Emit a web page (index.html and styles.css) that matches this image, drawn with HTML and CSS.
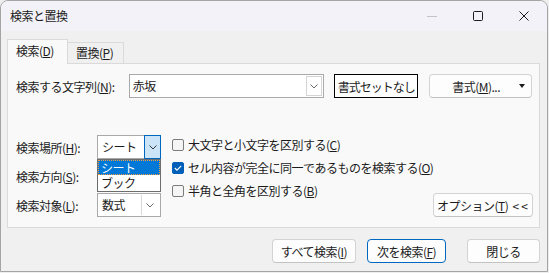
FILE: index.html
```html
<!DOCTYPE html>
<html>
<head>
    <title>検索と置換</title>
    <link rel="stylesheet" href="styles.css">
</head>
<body>
    <div class="window">
        <div class="titlebar">
            <span class="title">検索と置換</span>
            <div class="controls">
                <span class="ctl">
                    <svg width="10" height="10" viewBox="0 0 10 10"><path d="M0 5.5h10" stroke="#c4c4c4" stroke-width="1"/></svg>
                </span>
                <span class="ctl">
                    <svg width="10" height="10" viewBox="0 0 10 10"><rect x="0.5" y="0.5" width="9" height="9" rx="1" fill="none" stroke="#1b1b1b" stroke-width="1"/></svg>
                </span>
                <span class="ctl">
                    <svg width="10" height="10" viewBox="0 0 10 10"><path d="M0.5 0.5l9 9M9.5 0.5l-9 9" stroke="#1b1b1b" stroke-width="1"/></svg>
                </span>
            </div>
        </div>

        <div class="content">
            <div class="tabs">
                <div class="tab active">検索(<u>D</u>)</div>
                <div class="tab">置換(<u>P</u>)</div>
            </div>

            <div class="panel">
                <div class="find-row">
                    <span class="find-label">検索する文字列(<u>N</u>):</span>
                    <div class="combo find-combo">
                        <span class="combo-text">赤坂</span>
                        <span class="arrow-box">
                            <svg width="8" height="5" viewBox="0 0 8 5"><path d="M0.5 0.5l3.5 3.5 3.5-3.5" fill="none" stroke="#6a6a6a" stroke-width="1"/></svg>
                        </span>
                    </div>
                    <button class="btn plain-btn">書式セットなし</button>
                    <button class="btn format-btn"><span>書式(<u>M</u>)...</span><span class="tri"></span></button>
                </div>

                <div class="options">
                    <div class="fields">
                        <div class="field">
                            <span class="field-label">検索場所(<u>H</u>):</span>
                            <div class="combo select open">
                                <span class="combo-text">シート</span>
                                <span class="arrow-box active-arrow">
                                    <svg width="8" height="5" viewBox="0 0 8 5"><path d="M0.5 0.5l3.5 3.5 3.5-3.5" fill="none" stroke="#3a3a3a" stroke-width="1"/></svg>
                                </span>
                                <div class="dropdown">
                                    <div class="item selected">シート</div>
                                    <div class="item">ブック</div>
                                </div>
                            </div>
                        </div>
                        <div class="field">
                            <span class="field-label">検索方向(<u>S</u>):</span>
                            <div class="combo select"></div>
                        </div>
                        <div class="field">
                            <span class="field-label">検索対象(<u>L</u>):</span>
                            <div class="combo select">
                                <span class="combo-text">数式</span>
                                <span class="arrow-box split-arrow">
                                    <svg width="8" height="5" viewBox="0 0 8 5"><path d="M0.5 0.5l3.5 3.5 3.5-3.5" fill="none" stroke="#6a6a6a" stroke-width="1"/></svg>
                                </span>
                            </div>
                        </div>
                    </div>

                    <div class="checks">
                        <label class="check"><span class="box"></span>大文字と小文字を区別する(<u>C</u>)</label>
                        <label class="check"><span class="box checked">
                            <svg width="8" height="6" viewBox="0 0 8 6"><path d="M0.8 3l2.2 2.2 4.2-4.4" fill="none" stroke="#fff" stroke-width="1.1"/></svg>
                        </span>セル内容が完全に同一であるものを検索する(<u>O</u>)</label>
                        <label class="check"><span class="box"></span>半角と全角を区別する(<u>B</u>)</label>
                    </div>

                    <div class="side">
                        <button class="btn options-btn">オプション(<u>T</u>) <span class="chev">&lt;&lt;</span></button>
                    </div>
                </div>
            </div>

            <div class="footer">
                <button class="btn find-all">すべて検索(<u>I</u>)</button>
                <button class="btn find-next default">次を検索(<u>F</u>)</button>
                <button class="btn close-btn">閉じる</button>
            </div>
        </div>
    </div>
</body>
</html>
```

FILE: styles.css
```css
* {
    box-sizing: border-box;
}

body {
    margin: 0;
    font-family: "Noto Sans CJK JP", "Noto Sans", sans-serif;
    font-size: 12px;
    letter-spacing: -0.5px;
    color: #1b1b1b;
    background-color: #eeeeee;
}

u {
    text-decoration: underline;
    text-underline-offset: 1px;
}

.window {
    width: 548px;
    height: 272px;
    border: 1px solid #a4a4a4;
    border-radius: 8px 8px 0 0;
    background-color: #f0f0f0;
    overflow: hidden;
}

.titlebar {
    height: 30px;
    display: flex;
    align-items: center;
    justify-content: space-between;
    background-color: #f3f2f8;
    padding-left: 9px;
}

.title {
    line-height: 16px;
}

.controls {
    display: flex;
    height: 30px;
}

.ctl {
    width: 46px;
    height: 30px;
    display: flex;
    align-items: center;
    justify-content: center;
}

.content {
    padding: 8px 7px 0 6px;
}

.tabs {
    display: flex;
    align-items: flex-end;
    height: 24px;
}

.tab {
    height: 21px;
    width: 56px;
    border: 1px solid #dadada;
    border-left: none;
    border-bottom: none;
    background-color: #f0f0f0;
    padding-left: 8px;
    line-height: 20px;
    white-space: nowrap;
}

.tab.active {
    height: 25px;
    width: 61px;
    border-left: 1px solid #dadada;
    background-color: #f9f9f9;
    margin-bottom: -1px;
    position: relative;
    z-index: 1;
    line-height: 22px;
}

.panel {
    height: 165px;
    border: 1px solid #dadada;
    background-color: #f9f9f9;
    padding: 10px 7px 0 8px;
}

.find-row {
    display: flex;
    align-items: center;
    height: 24px;
}

.find-label {
    width: 113px;
    white-space: nowrap;
}

.combo {
    position: relative;
    display: flex;
    align-items: center;
    height: 24px;
    background-color: #ffffff;
    border: 1px solid #a9a9a9;
}

.combo-text {
    flex: 1;
    padding-left: 3px;
    line-height: 16px;
    white-space: nowrap;
}

.find-combo {
    width: 196px;
    height: 24px;
}

.arrow-box {
    width: 16px;
    height: 20px;
    margin-right: 1px;
    border: 1px solid #d4d4d4;
    display: flex;
    align-items: center;
    justify-content: center;
}

.btn {
    height: 24px;
    padding: 0;
    font-family: inherit;
    font-size: 12px;
    letter-spacing: -0.5px;
    white-space: nowrap;
    color: #1b1b1b;
    background-color: #fdfdfd;
    border: 1px solid #d3d3d3;
    border-bottom-color: #c2c2c2;
    border-radius: 4px;
}

.plain-btn {
    width: 84px;
    margin-left: 10px;
    letter-spacing: -1px;
    border: 1px solid #000000;
    border-radius: 0;
    background-color: #ffffff;
}

.format-btn {
    width: 103px;
    margin-left: 11px;
    display: flex;
    align-items: center;
    justify-content: space-between;
    padding: 0 6px 0 22px;
}

.tri {
    width: 0;
    height: 0;
    border-left: 3.5px solid transparent;
    border-right: 3.5px solid transparent;
    border-top: 4px solid #1b1b1b;
}

.options {
    display: flex;
    margin-top: 37px;
}

.fields {
    display: flex;
    flex-direction: column;
    gap: 5px;
    width: 145px;
}

.field {
    display: flex;
    align-items: center;
    height: 24px;
}

.field-label {
    width: 81px;
    white-space: nowrap;
}

.select {
    width: 64px;
    height: 24px;
}

.select .combo-text {
    padding-left: 4px;
}

.active-arrow {
    width: 17px;
    height: 24px;
    margin: -1px -1px -1px 0;
    border: 1px solid #0067c0;
    background-color: #cce4f7;
}

.split-arrow {
    border: none;
    border-left: 1px solid #d8d8d8;
    margin-right: 3px;
}

.dropdown {
    position: absolute;
    top: 23px;
    left: -1px;
    width: 64px;
    height: 33px;
    border: 1px solid #6e6e6e;
    background-color: #ffffff;
    z-index: 2;
}

.item {
    height: 15px;
    line-height: 15px;
    padding-left: 3px;
}

.item.selected {
    background-color: #0078d7;
    color: #ffffff;
    outline: 1px dotted #f4a040;
    outline-offset: -1px;
}

.checks {
    display: flex;
    flex-direction: column;
    margin-left: 11px;
    margin-top: -2px;
}

.check {
    display: flex;
    align-items: center;
    height: 23px;
    white-space: nowrap;
}

.box {
    width: 12px;
    height: 12px;
    border: 1px solid #7c7c7c;
    border-radius: 2px;
    background-color: #f5f5f5;
    margin-right: 4px;
    display: flex;
    align-items: center;
    justify-content: center;
}

.box.checked {
    border-color: #005fb8;
    background-color: #005fb8;
}

.side {
    flex: 1;
    display: flex;
    justify-content: flex-end;
    align-items: flex-end;
}

.options-btn {
    width: 100px;
    margin-right: 1px;
}

.chev {
    letter-spacing: 2px;
    margin-left: 2px;
}

.footer {
    display: flex;
    justify-content: flex-end;
    padding-top: 11px;
}

.find-all {
    width: 84px;
}

.find-next {
    width: 79px;
    margin-left: 11px;
}

.default {
    border: 1px solid #0067c0;
}

.close-btn {
    width: 73px;
    margin-left: 21px;
}
```
